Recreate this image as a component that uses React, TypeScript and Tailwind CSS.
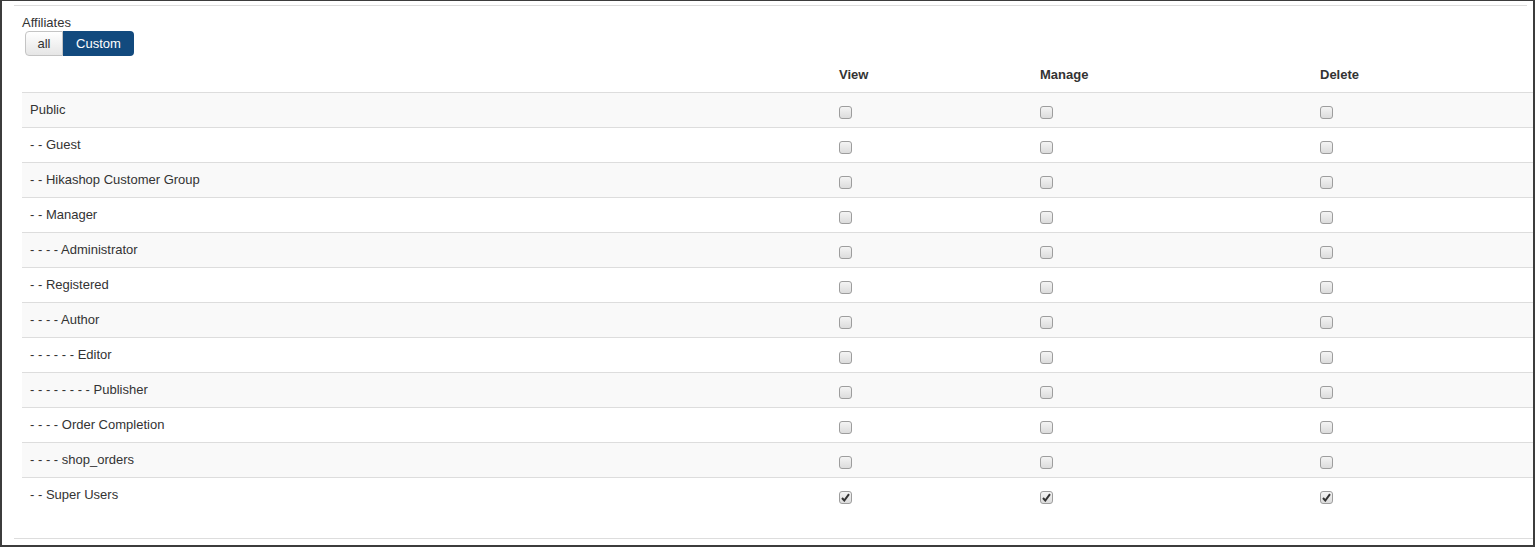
import React from "react";

const groups = [
  "Public",
  "- - Guest",
  "- - Hikashop Customer Group",
  "- - Manager",
  "- - - - Administrator",
  "- - Registered",
  "- - - - Author",
  "- - - - - - Editor",
  "- - - - - - - - Publisher",
  "- - - - Order Completion",
  "- - - - shop_orders",
  "- - Super Users",
];

const Box = ({ checked }: { checked: boolean }) => (
  <span className="mt-[5px] flex h-[13px] w-[13px] items-center justify-center rounded-[3px] border border-[#9d9d9d] bg-gradient-to-b from-[#f4f4f4] to-[#dcdcdc]">
    {checked && (
      <svg width="9" height="9" viewBox="0 0 9 9">
        <path d="M1 5 L3.3 7.5 L8 1.2" fill="none" stroke="#333" strokeWidth="2" />
      </svg>
    )}
  </span>
);

const cols = "grid grid-cols-[809px_201px_280px_221px]";

export default function App() {
  return (
    <div
      className="h-[547px] w-[1535px] border-x-2 border-t border-b-2 border-[#3c3c3c] bg-white pl-[12px] text-[13px] leading-[18px] text-[#333]"
      style={{ fontFamily: '"Liberation Sans", Arial, sans-serif' }}
    >
      <div className="mt-[4px] mr-[6px] border-t border-[#ddd]" />
      <div className="pl-[8px]">
        <div className="mt-[8px] h-[17px]">Affiliates</div>
        <div className="ml-[3px] flex h-[25px]">
          <button className="w-[38px] rounded-l-[4px] border border-[#c4c4c4] bg-gradient-to-b from-white to-[#e6e6e6] text-[#333]">
            all
          </button>
          <button className="w-[71px] rounded-r-[4px] bg-[#124a7e] text-white">
            Custom
          </button>
        </div>
        <div className="mt-[2px]">
          <div className={`${cols} font-bold`}>
            <div className="px-[8px] py-[8px]" />
            <div className="px-[8px] py-[8px]">View</div>
            <div className="px-[8px] py-[8px]">Manage</div>
            <div className="px-[8px] py-[8px]">Delete</div>
          </div>
          {groups.map((g, i) => {
            const on = g === "- - Super Users";
            return (
              <div
                key={g}
                className={`${cols} border-t border-[#ddd] ${i % 2 === 0 ? "bg-[#f9f9f9]" : "bg-white"}`}
              >
                <div className="px-[8px] py-[8px]">{g}</div>
                <div className="px-[8px] py-[8px]">
                  <Box checked={on} />
                </div>
                <div className="px-[8px] py-[8px]">
                  <Box checked={on} />
                </div>
                <div className="px-[8px] py-[8px]">
                  <Box checked={on} />
                </div>
              </div>
            );
          })}
        </div>
      </div>
      <div className="mt-[26px] border-t border-[#ddd]" />
    </div>
  );
}
